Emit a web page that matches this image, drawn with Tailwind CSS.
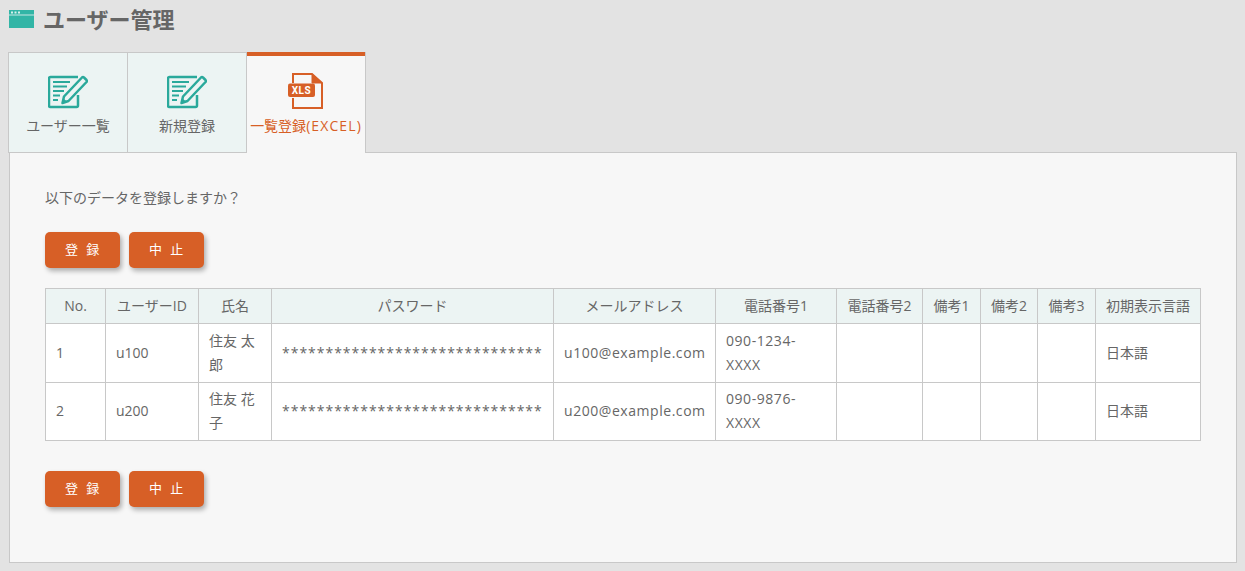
<!DOCTYPE html>
<html lang="ja">
<head>
<meta charset="utf-8">
<script src="https://cdn.jsdelivr.net/npm/@tailwindcss/browser@4"></script>
</head>
<body class="bg-[#e3e3e3] text-[#666] text-[14px] overflow-hidden font-['Open_Sans','Noto_Sans_CJK_JP',sans-serif]">
<div class="h-[571px] w-[1245px] overflow-hidden">
  <h1 class="h-[52px] flex items-start pl-[9px] pt-[4px]">
    <svg class="mt-[6px] w-[25px] h-[18px]" viewBox="0 0 25 18"><rect width="25" height="18" fill="#32b5a6"/><rect y="4.500" width="25" height="1" fill="#c5e8e3"/><rect x="2" y="1.500" width="2" height="2" fill="#d8f0ec"/><rect x="5.500" y="1.500" width="2" height="2" fill="#d8f0ec"/><rect x="9" y="1.500" width="2" height="2" fill="#d8f0ec"/></svg>
    <span class="ml-[9px] text-[22px] leading-[30px] font-bold text-[#666]">ユーザー管理</span>
  </h1>
  <div class="flex pl-[8px] h-[101px] relative z-10">
    <a class="w-[120px] h-[101px] bg-[#ecf4f3] border border-[#c8c8c8] flex flex-col items-center">
      <svg class="mt-[21px] w-[40px] h-[35px]" viewBox="0 0 40 35" fill="none"><path d="M30 3H2.500A1.500 1.500 0 0 0 1 4.500V31.500A1.500 1.500 0 0 0 2.500 33H28.500A1.500 1.500 0 0 0 30 31.500V21" stroke="#2aa99b" stroke-width="2.500"/><path d="M5 8h17M5 12.500h14M5 17h11M5 21.500h7M5 26h5" stroke="#2aa99b" stroke-width="2.200"/><path d="M14.500 29 16 22.500 34 3.500a1.500 1.500 0 0 1 2 0L38.500 6a1.500 1.500 0 0 1 0 2L20.500 27Z" fill="#ecf4f3" stroke="#2aa99b" stroke-width="2.500" stroke-linejoin="round"/><path d="M14.500 29 15.500 24.500 19 27.500Z" fill="#2aa99b"/></svg>
      <span class="mt-[7px] text-[14px] leading-[20px] text-[#666]">ユーザー一覧</span>
    </a>
    <a class="w-[120px] h-[101px] -ml-px bg-[#ecf4f3] border border-[#c8c8c8] flex flex-col items-center">
      <svg class="mt-[21px] w-[40px] h-[35px]" viewBox="0 0 40 35" fill="none"><path d="M30 3H2.500A1.500 1.500 0 0 0 1 4.500V31.500A1.500 1.500 0 0 0 2.500 33H28.500A1.500 1.500 0 0 0 30 31.500V21" stroke="#2aa99b" stroke-width="2.500"/><path d="M5 8h17M5 12.500h14M5 17h11M5 21.500h7M5 26h5" stroke="#2aa99b" stroke-width="2.200"/><path d="M14.500 29 16 22.500 34 3.500a1.500 1.500 0 0 1 2 0L38.500 6a1.500 1.500 0 0 1 0 2L20.500 27Z" fill="#ecf4f3" stroke="#2aa99b" stroke-width="2.500" stroke-linejoin="round"/><path d="M14.500 29 15.500 24.500 19 27.500Z" fill="#2aa99b"/></svg>
      <span class="mt-[7px] text-[14px] leading-[20px] text-[#666]">新規登録</span>
    </a>
    <a class="w-[120px] h-[101px] -ml-px bg-[#f7f7f7] border border-[#c8c8c8] border-t-0 border-b-0 flex flex-col items-center">
      <div class="w-full h-[4px] bg-[#d75f26]"></div>
      <svg class="mt-[17px] w-[36px] h-[36px]" viewBox="0 0 36 36" fill="none"><path d="M5 10V1H24L34 10V35H5V25" stroke="#d75f26" stroke-width="2"/><path d="M24 1V10H34Z" fill="#d75f26" stroke="#d75f26" stroke-width="1"/><rect x="0" y="10.500" width="27" height="13.500" rx="2" fill="#d75f26"/><text x="13.500" y="21.200" text-anchor="middle" fill="#fff" font-size="10" font-weight="700" font-family="Roboto" letter-spacing=".6">XLS</text></svg>
      <span class="mt-[7px] text-[14px] leading-[20px] text-[#d75f26] whitespace-nowrap">一覧登録<span class="tracking-[1.1px]">(EXCEL)</span></span>
    </a>
  </div>
  <main class="ml-[9px] w-[1228px] h-[411px] -mt-px bg-[#f7f7f7] border border-[#c8c8c8] px-[35px] pt-[34px]">
    <p class="leading-[22px] h-[22px] text-[14px]">以下のデータを登録しますか？</p>
    <div class="flex gap-[9px] mt-[23px]">
      <button class="w-[75px] h-[36px] rounded-[5px] bg-[#d75f26] text-white text-[13px] tracking-[0.5px] shadow-[2px_3px_5px_rgba(0,0,0,0.3)]">登&nbsp;&nbsp;録</button>
      <button class="w-[75px] h-[36px] rounded-[5px] bg-[#d75f26] text-white text-[13px] tracking-[0.5px] shadow-[2px_3px_5px_rgba(0,0,0,0.3)]">中&nbsp;&nbsp;止</button>
    </div>
    <table class="mt-[20px] w-[1155px] table-fixed border-collapse bg-white text-[14px] leading-[24px]">
      <colgroup>
        <col class="w-[60px]"><col class="w-[93px]"><col class="w-[73px]"><col class="w-[282px]"><col class="w-[162px]"><col class="w-[121px]"><col class="w-[86px]"><col class="w-[58px]"><col class="w-[57px]"><col class="w-[58px]"><col class="w-[105px]">
      </colgroup>
      <thead>
        <tr class="bg-[#ecf4f3] h-[35px]">
          <th class="border border-[#c8c8c8] font-normal whitespace-nowrap">No.</th>
          <th class="border border-[#c8c8c8] font-normal whitespace-nowrap">ユーザーID</th>
          <th class="border border-[#c8c8c8] font-normal whitespace-nowrap">氏名</th>
          <th class="border border-[#c8c8c8] font-normal whitespace-nowrap">パスワード</th>
          <th class="border border-[#c8c8c8] font-normal whitespace-nowrap">メールアドレス</th>
          <th class="border border-[#c8c8c8] font-normal whitespace-nowrap">電話番号1</th>
          <th class="border border-[#c8c8c8] font-normal whitespace-nowrap">電話番号2</th>
          <th class="border border-[#c8c8c8] font-normal whitespace-nowrap">備考1</th>
          <th class="border border-[#c8c8c8] font-normal whitespace-nowrap">備考2</th>
          <th class="border border-[#c8c8c8] font-normal whitespace-nowrap">備考3</th>
          <th class="border border-[#c8c8c8] font-normal whitespace-nowrap">初期表示言語</th>
        </tr>
      </thead>
      <tbody>
        <tr class="h-[59px]">
          <td class="border border-[#c8c8c8] px-[10px]">1</td>
          <td class="border border-[#c8c8c8] px-[10px]">u100</td>
          <td class="border border-[#c8c8c8] px-[10px]">住友 太郎</td>
          <td class="border border-[#c8c8c8] px-[10px] whitespace-nowrap tracking-[0.98px]">******************************</td>
          <td class="border border-[#c8c8c8] px-[10px] whitespace-nowrap tracking-[0.55px]">u100@example.com</td>
          <td class="border border-[#c8c8c8] px-[10px] tracking-[0.55px]">090-1234-XXXX</td>
          <td class="border border-[#c8c8c8] px-[10px]"></td>
          <td class="border border-[#c8c8c8] px-[10px]"></td>
          <td class="border border-[#c8c8c8] px-[10px]"></td>
          <td class="border border-[#c8c8c8] px-[10px]"></td>
          <td class="border border-[#c8c8c8] px-[10px]">日本語</td>
        </tr>
        <tr class="h-[58px]">
          <td class="border border-[#c8c8c8] px-[10px] pb-[2px]">2</td>
          <td class="border border-[#c8c8c8] px-[10px] pb-[2px]">u200</td>
          <td class="border border-[#c8c8c8] px-[10px] pb-[2px]">住友 花子</td>
          <td class="border border-[#c8c8c8] px-[10px] pb-[2px] whitespace-nowrap tracking-[0.98px]">******************************</td>
          <td class="border border-[#c8c8c8] px-[10px] pb-[2px] whitespace-nowrap tracking-[0.55px]">u200@example.com</td>
          <td class="border border-[#c8c8c8] px-[10px] pb-[2px] tracking-[0.55px]">090-9876-XXXX</td>
          <td class="border border-[#c8c8c8] px-[10px]"></td>
          <td class="border border-[#c8c8c8] px-[10px]"></td>
          <td class="border border-[#c8c8c8] px-[10px]"></td>
          <td class="border border-[#c8c8c8] px-[10px]"></td>
          <td class="border border-[#c8c8c8] px-[10px] pb-[2px]">日本語</td>
        </tr>
      </tbody>
    </table>
    <div class="flex gap-[9px] mt-[30px]">
      <button class="w-[75px] h-[36px] rounded-[5px] bg-[#d75f26] text-white text-[13px] tracking-[0.5px] shadow-[2px_3px_5px_rgba(0,0,0,0.3)]">登&nbsp;&nbsp;録</button>
      <button class="w-[75px] h-[36px] rounded-[5px] bg-[#d75f26] text-white text-[13px] tracking-[0.5px] shadow-[2px_3px_5px_rgba(0,0,0,0.3)]">中&nbsp;&nbsp;止</button>
    </div>
  </main>
</div>
</body>
</html>
